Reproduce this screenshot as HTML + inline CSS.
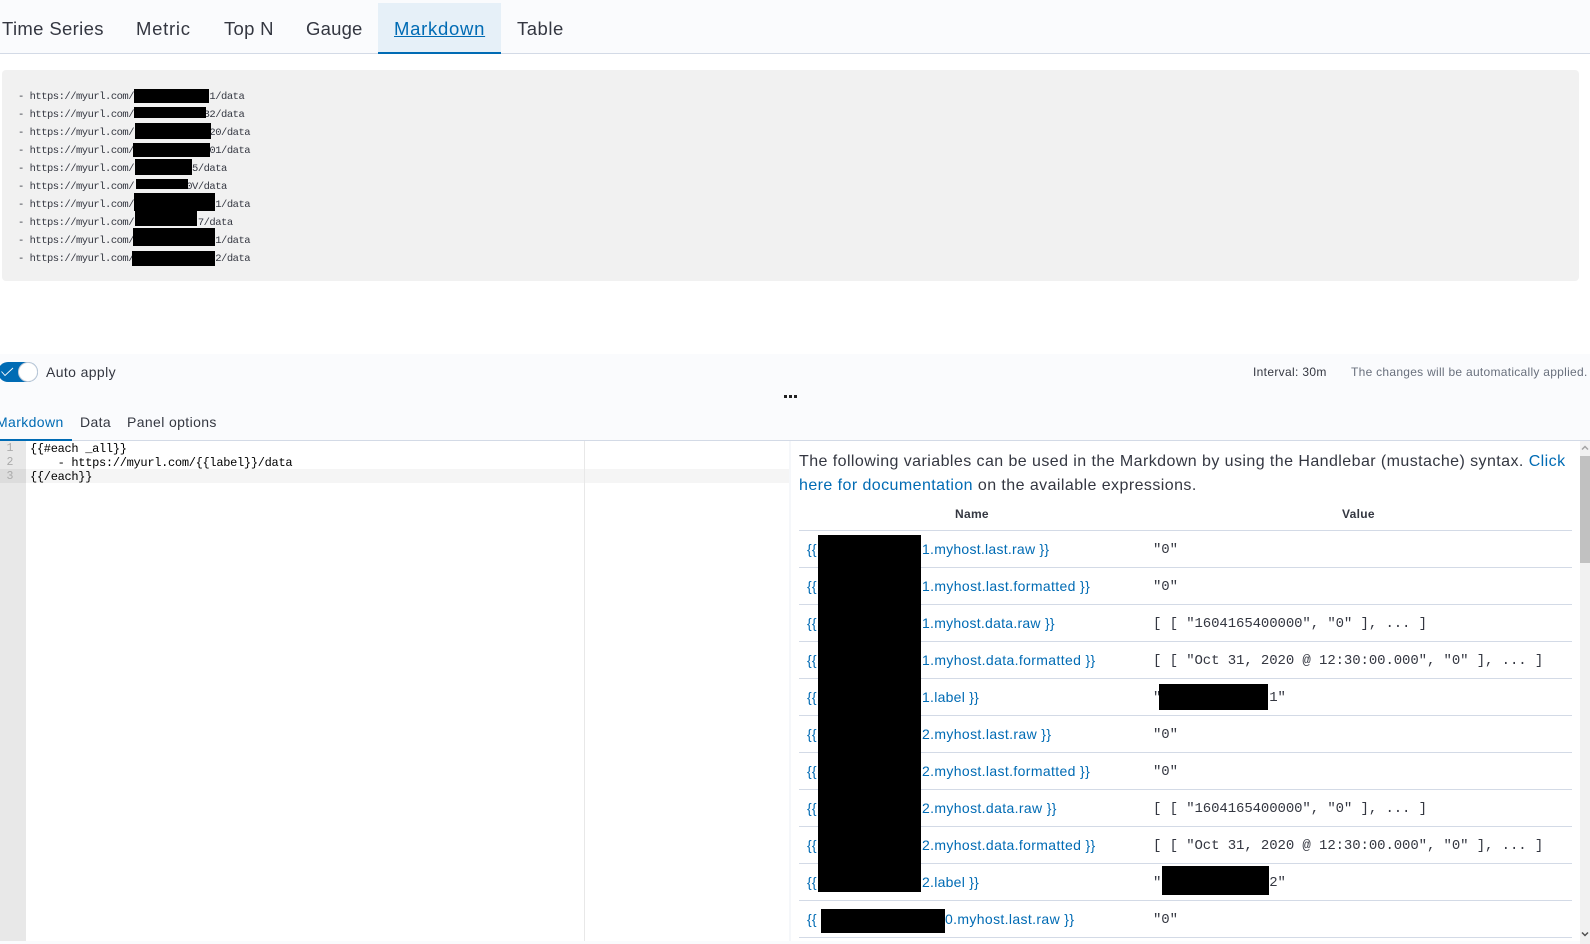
<!DOCTYPE html>
<html lang="en">
<head>
<meta charset="utf-8">
<title>Markdown panel</title>
<style>
html,body{margin:0;padding:0;background:#fff}
body{width:1590px;height:944px;position:relative;overflow:hidden;font-family:"Liberation Sans",sans-serif;color:#343741}
.a{position:absolute;white-space:pre}
.tabs{position:absolute;left:0;top:0;width:1590px;height:53px;background:#fafbfd;border-bottom:1px solid #d3dae6}
.tab{position:absolute;top:0;line-height:57px;font-size:18.5px;letter-spacing:.72px;color:#343741}
.mdtab{position:absolute;left:378px;top:3px;width:123px;height:49px;background:#e6f0f8;border-bottom:2px solid #006bb4}
.out{position:absolute;left:2px;top:70px;width:1577px;height:211px;background:#f1f1f1;border-radius:4px}
.u{position:absolute;left:18px;font:10.5px/18px "Liberation Mono",monospace;letter-spacing:-.5px;color:#343741;white-space:pre}
.k{position:absolute;background:#000}
.bar{position:absolute;left:0;top:354px;width:1590px;height:86px;background:#fafbfd;border-bottom:1px solid #d3dae6}
.sm{font-size:14px;letter-spacing:.38px;line-height:20px}
.note{font-size:12px;letter-spacing:.28px;line-height:16px}
.gut{position:absolute;left:0;top:441px;width:26px;height:503px;background:#e8e8e8}
.ln{position:absolute;left:0;width:20px;text-align:center;font:11.5px/14px "Liberation Mono",monospace;color:#aaa}
.code{position:absolute;left:30px;font:12px/14px "Liberation Mono",monospace;letter-spacing:-.3px;color:#000;white-space:pre}
.p{position:absolute;left:799px;font-size:16px;line-height:24px;letter-spacing:.43px;color:#343741;white-space:pre}
.p a,.nm{color:#006bb4;text-decoration:none}
.row{position:absolute;left:799px;width:773px;box-sizing:border-box;height:38px;border-bottom:1px solid #d3dae6}
.nm{position:absolute;top:1px;font-size:14px;line-height:37px;letter-spacing:.26px;white-space:pre}
.w{letter-spacing:.36px}
.v{position:absolute;left:354px;top:2px;font:14px/37px "Liberation Mono",monospace;letter-spacing:-.1px;color:#343741;white-space:pre}
.th{position:absolute;top:506px;font-size:12px;font-weight:bold;line-height:16px;color:#343741;letter-spacing:.3px}
</style>
</head>
<body>
<nav class="tabs">
  <div class="mdtab"></div>
  <span class="tab" style="left:2px;letter-spacing:.35px">Time Series</span>
  <span class="tab" style="left:136px">Metric</span>
  <span class="tab" style="left:224px;letter-spacing:.3px">Top N</span>
  <span class="tab" style="left:306px;letter-spacing:.2px">Gauge</span>
  <span class="tab" style="left:394px;color:#006bb4;text-decoration:underline">Markdown</span>
  <span class="tab" style="left:517px;letter-spacing:.5px">Table</span>
</nav>

<section class="out"></section>
<div class="u" style="top:88px">- https://myurl.com/             1/data</div>
<div class="u" style="top:106px">- https://myurl.com/            32/data</div>
<div class="u" style="top:124px">- https://myurl.com/             20/data</div>
<div class="u" style="top:142px">- https://myurl.com/             01/data</div>
<div class="u" style="top:160px">- https://myurl.com/          5/data</div>
<div class="u" style="top:178px">- https://myurl.com/         0V/data</div>
<div class="u" style="top:196px">- https://myurl.com/              1/data</div>
<div class="u" style="top:214px">- https://myurl.com/           7/data</div>
<div class="u" style="top:232px">- https://myurl.com/              1/data</div>
<div class="u" style="top:250px">- https://myurl.com/              2/data</div>
<div class="k" style="left:134px;top:89px;width:75px;height:14px"></div>
<div class="k" style="left:134px;top:107px;width:72px;height:11px"></div>
<div class="k" style="left:135px;top:123px;width:76px;height:16px"></div>
<div class="k" style="left:133px;top:143px;width:77px;height:14px"></div>
<div class="k" style="left:135px;top:159px;width:57px;height:16px"></div>
<div class="k" style="left:136px;top:179px;width:52px;height:10px"></div>
<div class="k" style="left:134px;top:193px;width:81px;height:18px"></div>
<div class="k" style="left:135px;top:211px;width:62px;height:15px"></div>
<div class="k" style="left:133px;top:228px;width:82px;height:18px"></div>
<div class="k" style="left:132px;top:251px;width:83px;height:15px"></div>

<div class="bar"></div>
<div class="a" style="left:-2px;top:362px;width:40px;height:20px;border-radius:10px;background:#006bb4"></div>
<svg class="a" style="left:0;top:366px" width="14" height="12" viewBox="0 0 14 12"><path d="M1.5 5.5 L5 9.5 L13 2" fill="none" stroke="#fff" stroke-width=".9"/></svg>
<div class="a" style="left:18px;top:362px;width:18px;height:18px;border-radius:50%;background:#fff;border:1px solid #c5cdd9"></div>
<span class="a sm" style="left:46px;top:362px;color:#343741">Auto apply</span>
<span class="a note" style="left:1253px;top:364px;color:#343741;letter-spacing:.33px">Interval: 30m</span>
<span class="a note" style="left:1351px;top:364px;color:#69707d">The changes will be automatically applied.</span>
<div class="k" style="left:784px;top:395px;width:3px;height:3px;background:#222"></div>
<div class="k" style="left:789px;top:395px;width:3px;height:3px;background:#222"></div>
<div class="k" style="left:794px;top:395px;width:3px;height:3px;background:#222"></div>

<span class="a sm" style="left:-4px;top:412px;color:#006bb4">Markdown</span>
<span class="a sm" style="left:80px;top:412px">Data</span>
<span class="a sm" style="left:127px;top:412px">Panel options</span>
<div class="a" style="left:0;top:439px;width:72px;height:2px;background:#006bb4"></div>

<div class="gut"></div>
<div class="a" style="left:26px;top:469px;width:763px;height:14px;background:#f5f5f5"></div>
<div class="a" style="left:0;top:469px;width:26px;height:14px;background:#dcdcdc"></div>
<div class="a" style="left:584px;top:441px;width:1px;height:503px;background:#e8e8e8"></div>
<div class="ln" style="top:442px">1</div>
<div class="ln" style="top:456px">2</div>
<div class="ln" style="top:470px">3</div>
<div class="code" style="top:442px">{{#each _all}}</div>
<div class="code" style="top:456px">    - https://myurl.com/{{label}}/data</div>
<div class="code" style="top:470px">{{/each}}</div>

<div class="a" style="left:789px;top:441px;width:2px;height:503px;background:#f5f7fa"></div>
<div class="p" style="top:450px">The following variables can be used in the Markdown by using the Handlebar (mustache) syntax. <a>Click</a></div>
<div class="p" style="top:474px"><a>here for documentation</a> on the available expressions.</div>
<span class="th" style="left:955px">Name</span>
<span class="th" style="left:1342px">Value</span>
<div class="a" style="left:799px;top:530px;width:773px;height:1px;background:#d3dae6"></div>

<div class="row" style="top:530px"><span class="nm" style="left:8px">{{</span><span class="nm" style="left:123px">1.myhost.last.raw }}</span><span class="v">"0"</span></div>
<div class="row" style="top:567px"><span class="nm" style="left:8px">{{</span><span class="nm w" style="left:123px">1.myhost.last.formatted }}</span><span class="v">"0"</span></div>
<div class="row" style="top:604px"><span class="nm" style="left:8px">{{</span><span class="nm" style="left:123px">1.myhost.data.raw }}</span><span class="v">[ [ "1604165400000", "0" ], ... ]</span></div>
<div class="row" style="top:641px"><span class="nm" style="left:8px">{{</span><span class="nm w" style="left:123px">1.myhost.data.formatted }}</span><span class="v">[ [ "Oct 31, 2020 @ 12:30:00.000", "0" ], ... ]</span></div>
<div class="row" style="top:678px"><span class="nm" style="left:8px">{{</span><span class="nm" style="left:123px">1.label }}</span><span class="v">"             1"</span></div>
<div class="row" style="top:715px"><span class="nm" style="left:8px">{{</span><span class="nm w" style="left:123px">2.myhost.last.raw }}</span><span class="v">"0"</span></div>
<div class="row" style="top:752px"><span class="nm" style="left:8px">{{</span><span class="nm w" style="left:123px">2.myhost.last.formatted }}</span><span class="v">"0"</span></div>
<div class="row" style="top:789px"><span class="nm" style="left:8px">{{</span><span class="nm w" style="left:123px">2.myhost.data.raw }}</span><span class="v">[ [ "1604165400000", "0" ], ... ]</span></div>
<div class="row" style="top:826px"><span class="nm" style="left:8px">{{</span><span class="nm w" style="left:123px">2.myhost.data.formatted }}</span><span class="v">[ [ "Oct 31, 2020 @ 12:30:00.000", "0" ], ... ]</span></div>
<div class="row" style="top:863px"><span class="nm" style="left:8px">{{</span><span class="nm" style="left:123px">2.label }}</span><span class="v">"             2"</span></div>
<div class="row" style="top:900px"><span class="nm" style="left:8px">{{</span><span class="nm w" style="left:146px">0.myhost.last.raw }}</span><span class="v">"0"</span></div>

<div class="k" style="left:818px;top:535px;width:103px;height:357px"></div>
<div class="k" style="left:821px;top:909px;width:124px;height:24px"></div>
<div class="k" style="left:1159px;top:684px;width:109px;height:26px"></div>
<div class="k" style="left:1162px;top:866px;width:107px;height:29px"></div>

<div class="a" style="left:0;top:941px;width:1590px;height:3px;background:#fafbfd"></div>
<div class="a" style="left:1580px;top:441px;width:10px;height:503px;background:#f1f1f1"></div>
<div class="a" style="left:1580px;top:456px;width:10px;height:107px;background:#c1c1c1"></div>
<svg class="a" style="left:1581px;top:444px" width="8" height="8" viewBox="0 0 8 8"><path d="M1 5.5 L4 2.5 L7 5.5" fill="none" stroke="#a3a3a3" stroke-width="1.5"/></svg>
<svg class="a" style="left:1581px;top:930px" width="8" height="8" viewBox="0 0 8 8"><path d="M1 2.5 L4 5.5 L7 2.5" fill="none" stroke="#505050" stroke-width="1.5"/></svg>
</body>
</html>
